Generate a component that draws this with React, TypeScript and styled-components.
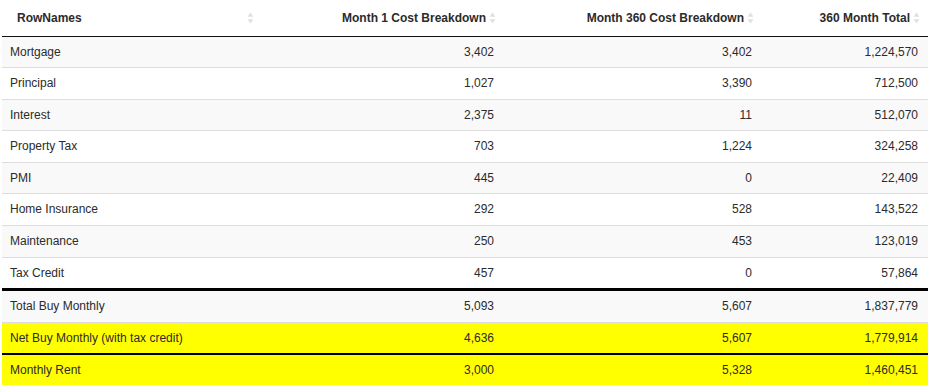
import React from 'react'
import styled, { createGlobalStyle } from 'styled-components'

const GlobalStyle = createGlobalStyle`
  html, body {
    margin: 0;
    padding: 0;
    background: #fff;
  }
  body {
    font-family: 'Liberation Sans', Arial, Helvetica, sans-serif;
    font-size: 12px;
    color: #2b2b2b;
  }
`

type Tone = 'striped' | 'plain' | 'yellow'
type Edge = 'light' | 'thick' | 'medium' | 'none'

const S = {
  Wrap: styled.div`
    padding: 0 2px 0 2px;
  `,
  Table: styled.table`
    width: 926px;
    border-collapse: collapse;
    border-spacing: 0;
    table-layout: fixed;
  `,
  HeadCell: styled.th<{ align: 'left' | 'right' }>`
    height: 36px;
    padding: 0 8px 0 15px;
    box-sizing: border-box;
    font-weight: 700;
    color: #2b2b2b;
    text-align: ${({ align }) => align};
    border-bottom: 1px solid #111;
    white-space: nowrap;
    .inner {
      display: flex;
      align-items: center;
      justify-content: ${({ align }) => (align === 'left' ? 'space-between' : 'flex-end')};
      gap: 3px;
    }
  `,
  Row: styled.tr<{ tone: Tone; edge: Edge }>`
    background: ${({ tone }) =>
      // eslint-disable-next-line no-nested-ternary
      tone === 'yellow' ? '#ffff00' : tone === 'striped' ? '#f9f9f9' : '#fff'};
    border-top: ${({ edge }) =>
      // eslint-disable-next-line no-nested-ternary
      edge === 'thick' ? '3px solid #000' : edge === 'medium' ? '2px solid #000' : 'none'};
  `,
  Cell: styled.td<{ align: 'left' | 'right'; last: boolean }>`
    padding: 8px 10px 8px 8px;
    line-height: 14.6px;
    text-align: ${({ align }) => align};
    border-bottom: ${({ last }) => (last ? 'none' : '1px solid #ddd')};
    white-space: nowrap;
  `
}

const SortIcon = () => (
  <svg width='7' height='12' viewBox='0 0 7 12'>
    <path d='M3.5 0.5 L6.5 4.8 L0.5 4.8 Z' fill='#e0e0e0' />
    <path d='M3.5 11.5 L6.5 7.2 L0.5 7.2 Z' fill='#e0e0e0' />
  </svg>
)

const columns: { title: string; width: number; align: 'left' | 'right' }[] = [
  { title: 'RowNames', width: 260, align: 'left' },
  { title: 'Month 1 Cost Breakdown', width: 242, align: 'right' },
  { title: 'Month 360 Cost Breakdown', width: 258, align: 'right' },
  { title: '360 Month Total', width: 166, align: 'right' }
]

type RowData = { name: string; values: string[]; tone: Tone; edge: Edge; last?: boolean }

const rows: RowData[] = [
  { name: 'Mortgage', values: ['3,402', '3,402', '1,224,570'], tone: 'striped', edge: 'none' },
  { name: 'Principal', values: ['1,027', '3,390', '712,500'], tone: 'plain', edge: 'none' },
  { name: 'Interest', values: ['2,375', '11', '512,070'], tone: 'striped', edge: 'none' },
  { name: 'Property Tax', values: ['703', '1,224', '324,258'], tone: 'plain', edge: 'none' },
  { name: 'PMI', values: ['445', '0', '22,409'], tone: 'striped', edge: 'none' },
  { name: 'Home Insurance', values: ['292', '528', '143,522'], tone: 'plain', edge: 'none' },
  { name: 'Maintenance', values: ['250', '453', '123,019'], tone: 'striped', edge: 'none' },
  { name: 'Tax Credit', values: ['457', '0', '57,864'], tone: 'plain', edge: 'none', last: true },
  { name: 'Total Buy Monthly', values: ['5,093', '5,607', '1,837,779'], tone: 'striped', edge: 'thick' },
  { name: 'Net Buy Monthly (with tax credit)', values: ['4,636', '5,607', '1,779,914'], tone: 'yellow', edge: 'none', last: true },
  { name: 'Monthly Rent', values: ['3,000', '5,328', '1,460,451'], tone: 'yellow', edge: 'medium', last: true }
]

export default function App() {
  return (
    <S.Wrap>
      <GlobalStyle />
      <S.Table>
        <colgroup>
          {columns.map((c) => (
            <col key={c.title} style={{ width: c.width }} />
          ))}
        </colgroup>
        <thead>
          <tr>
            {columns.map((c) => (
              <S.HeadCell key={c.title} align={c.align}>
                <div className='inner'>
                  <span>{c.title}</span>
                  <SortIcon />
                </div>
              </S.HeadCell>
            ))}
          </tr>
        </thead>
        <tbody>
          {rows.map((r) => (
            <S.Row key={r.name} tone={r.tone} edge={r.edge}>
              <S.Cell align='left' last={!!r.last}>
                {r.name}
              </S.Cell>
              {r.values.map((v, i) => (
                <S.Cell key={i} align='right' last={!!r.last}>
                  {v}
                </S.Cell>
              ))}
            </S.Row>
          ))}
        </tbody>
      </S.Table>
    </S.Wrap>
  )
}
